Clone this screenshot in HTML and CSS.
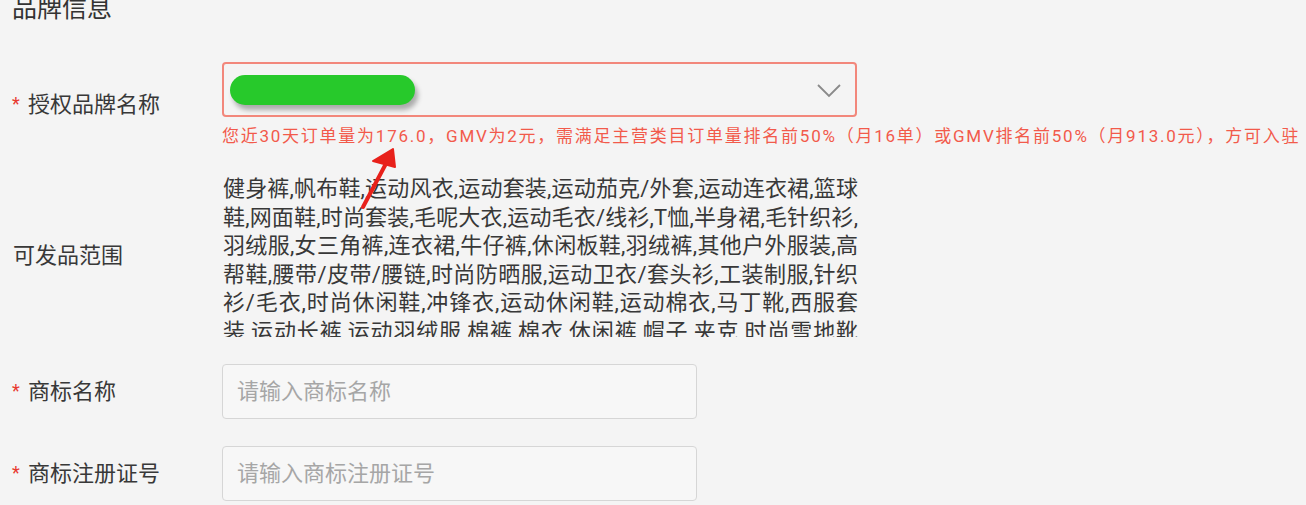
FILE: index.html
```html
<!DOCTYPE html>
<html lang="zh-CN">
<head>
    <meta charset="UTF-8">
    <meta name="viewport" content="width=device-width, initial-scale=1.0">
    <title>品牌信息</title>
    <link rel="stylesheet" href="styles.css">
</head>
<body>
    <div class="page">
        <h2 class="section-title">品牌信息</h2>

        <div class="form">
            <div class="row">
                <label class="label"><span class="star">*</span>授权品牌名称</label>
                <div class="control">
                    <div class="select is-error">
                        <span class="redact"></span>
                        <svg class="chevron" width="26" height="16" viewBox="0 0 26 16">
                            <polyline points="2,2 13,13 24,2" fill="none" stroke="#8a8a8a" stroke-width="1.8"/>
                        </svg>
                    </div>
                    <p class="error-tip">您近30天订单量为176.0，GMV为2元，需满足主营类目订单量排名前50%（月16单）或GMV排名前50%（月913.0元），方可入驻</p>
                </div>
            </div>

            <div class="row">
                <label class="label label-plain">可发品范围</label>
                <div class="control">
                    <div class="scope-text">健身裤,帆布鞋,运动风衣,运动套装,运动茄克/外套,运动连衣裙,篮球<br>鞋,网面鞋,时尚套装,毛呢大衣,运动毛衣/线衫,T恤,半身裙,毛针织衫,<br>羽绒服,女三角裤,连衣裙,牛仔裤,休闲板鞋,羽绒裤,其他户外服装,高<br>帮鞋,腰带/皮带/腰链,时尚防晒服,运动卫衣/套头衫,工装制服,针织<br>衫/毛衣,时尚休闲鞋,冲锋衣,运动休闲鞋,运动棉衣,马丁靴,西服套<br>装,运动长裤,运动羽绒服,棉裤,棉衣,休闲裤,帽子,夹克,时尚雪地靴<br>运动短裤,运动T恤,休闲裤,卫衣,针织衫</div>
                </div>
            </div>

            <div class="row">
                <label class="label"><span class="star">*</span>商标名称</label>
                <div class="control">
                    <input class="input" type="text" placeholder="请输入商标名称">
                </div>
            </div>

            <div class="row">
                <label class="label"><span class="star">*</span>商标注册证号</label>
                <div class="control">
                    <input class="input" type="text" placeholder="请输入商标注册证号">
                </div>
            </div>
        </div>

        <!-- annotation arrow drawn over the screenshot -->
        <svg class="mark-arrow" width="60" height="80" viewBox="0 0 60 80">
            <line x1="13" y1="71" x2="40" y2="20" stroke="#e8211b" stroke-width="4" stroke-linecap="round"/>
            <polygon points="43,13 23,25 45,31" fill="#e8211b" stroke="#e8211b" stroke-width="2" stroke-linejoin="round"/>
        </svg>
    </div>
</body>
</html>
```

FILE: styles.css
```css
body {
    margin: 0;
    background-color: #f4f4f4;
    font-family: Roboto, "Noto Sans CJK SC", sans-serif;
    color: #3d3d3d;
    overflow: hidden;
}

.page {
    position: relative;
    padding-left: 12px;
}

.section-title {
    margin: -3px 0 0 0;
    font-size: 25px;
    line-height: 24px;
    font-weight: normal;
    color: #333;
}

.form {
    display: flex;
    flex-direction: column;
    gap: 27px;
    margin-top: 41px;
}

.row {
    display: flex;
    align-items: center;
}

.label {
    width: 210px;
    flex-shrink: 0;
    font-size: 22px;
    line-height: 28px;
    color: #383838;
}

.label-plain {
    padding-left: 1px;
}

.star {
    display: inline-block;
    width: 16px;
    color: #e8392f;
    font-size: 18px;
    vertical-align: 2px;
}

.control {
    width: 635px;
}

.select {
    position: relative;
    height: 55px;
    box-sizing: border-box;
    border: 2px solid #f2877b;
    border-radius: 4px;
    display: flex;
    align-items: center;
    padding-left: 6px;
}

.redact {
    display: block;
    width: 185px;
    height: 30px;
    border-radius: 15px;
    background-color: #27c92b;
    box-shadow: 3px 5px 5px rgba(0, 0, 0, 0.3);
    margin-top: 1px;
}

.chevron {
    position: absolute;
    right: 13px;
    top: 19px;
}

.error-tip {
    margin: 8px 0 0 0;
    width: 1100px;
    white-space: nowrap;
    font-size: 17px;
    line-height: 22px;
    letter-spacing: 1.75px;
    color: #f25a4b;
}

.scope-text {
    height: 163px;
    overflow: hidden;
    font-size: 22px;
    line-height: 28.5px;
    text-align: justify;
    text-align-last: justify;
    color: #383838;
    padding-top: 1px;
    box-sizing: border-box;
}

.input {
    width: 475px;
    height: 55px;
    box-sizing: border-box;
    border: 1px solid #d6d6d6;
    border-radius: 4px;
    background-color: #f7f7f7;
    padding: 0 14px;
    font-family: Roboto, "Noto Sans CJK SC", sans-serif;
    font-size: 22px;
    color: #333;
    outline: none;
}

.input::placeholder {
    color: #a6a6a6;
}

.mark-arrow {
    position: absolute;
    left: 350px;
    top: 139px;
}
```
